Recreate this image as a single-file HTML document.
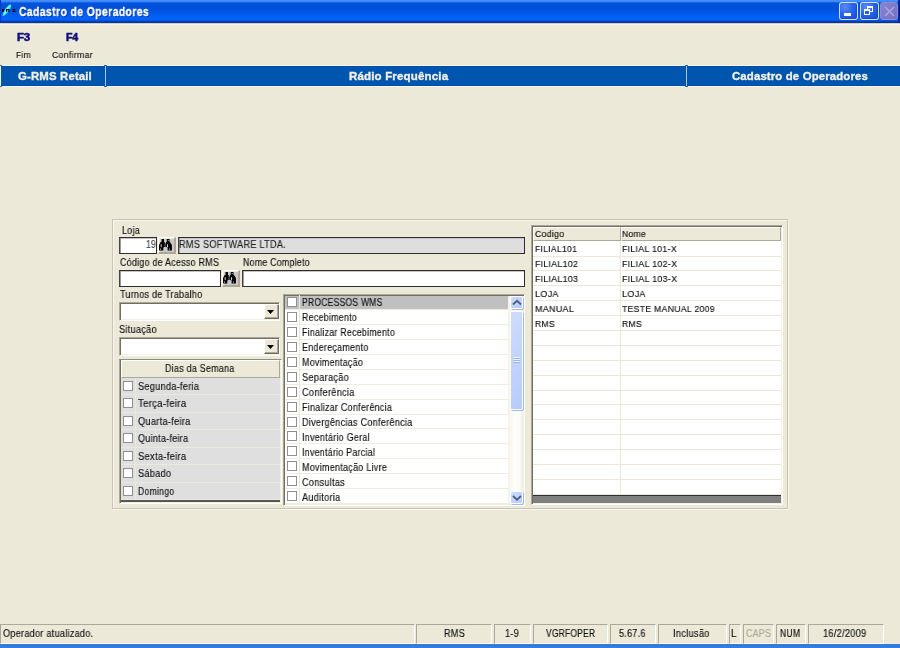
<!DOCTYPE html>
<html><head><meta charset="utf-8"><title>Cadastro de Operadores</title>
<style>
html,body{margin:0;padding:0;width:900px;height:648px;overflow:hidden;background:#ece9d8;font-family:'Liberation Sans', sans-serif;position:relative}
</style></head><body>
<div style="position:absolute;left:0;top:0;width:900px;height:23px;background:linear-gradient(to bottom,#4a95ff 0px,#3a86f8 1.5px,#1566e8 2.5px,#0053da 3.5px,#0050d6 8px,#0054e0 11px,#005cf0 15px,#0064fa 19px,#0062f6 20px,#0048cc 21px,#0a35a0 22px,#0a35a0 23px)"></div>
<div style="position:absolute;left:0px;top:0px;width:1px;height:23px;background:#0038c8"></div>
<div style="position:absolute;left:898px;top:0px;width:2px;height:23px;background:linear-gradient(to right,#0030b0,#001888)"></div>
<div style="position:absolute;left:0px;top:23px;width:900px;height:1px;background:#d5cfb8"></div>
<div style="position:absolute;left:0px;top:24px;width:900px;height:1px;background:#f6f4ec"></div>
<svg style="position:absolute;left:0px;top:2px" width="18" height="17" viewBox="0 0 18 17">
<path d="M2.6 13.2 C3 9.5 5.5 5.5 9 2.9 C10.4 2.1 11.6 2.6 11.2 4.2 C10.4 7.5 7.8 11 4.6 13.6 C3.7 14.3 2.5 14.3 2.6 13.2 Z" fill="#35e6f0"/>
<path d="M4 12.4 C5.5 9.5 7.2 6.5 10 3.6" stroke="#b6fcff" stroke-width="1" fill="none"/>
<g fill="#000"><rect x="2" y="7.2" width="1.7" height="2.6"/><rect x="2" y="7.2" width="2.6" height="1"/>
<rect x="6" y="7.2" width="1.1" height="2.6"/><rect x="8.3" y="7.2" width="1.1" height="2.6"/><rect x="6" y="7.2" width="3.4" height="1"/>
<rect x="12.6" y="7.3" width="2.8" height="1.1"/><rect x="12.6" y="8.9" width="2.8" height="1.1"/></g>
</svg>
<div style="position:absolute;left:839px;top:2px;width:17px;height:16px;border:1px solid rgba(240,246,255,0.85);border-radius:3px;background:radial-gradient(circle at 30% 25%,#5a8cf8 0%,#2a64ea 45%,#1048d8 100%);box-shadow:inset -1px -1px 0 #1a4cc8"><div style="position:absolute;left:4px;top:10px;width:7px;height:3px;background:#fff"></div></div>
<div style="position:absolute;left:860px;top:2px;width:17px;height:16px;border:1px solid rgba(240,246,255,0.85);border-radius:3px;background:radial-gradient(circle at 30% 25%,#5a8cf8 0%,#2a64ea 45%,#1048d8 100%);box-shadow:inset -1px -1px 0 #1a4cc8"><div style="position:absolute;left:6px;top:3px;width:4px;height:3px;border:1px solid #fff;border-top-width:2px"></div><div style="position:absolute;left:3px;top:5.6px;width:4px;height:3px;border:1px solid #fff;border-top-width:2px;background:#2a5fe6"></div></div>
<div style="position:absolute;left:880px;top:2px;width:16px;height:16px;border:1px solid #8e8cd4;border-radius:3px;background:linear-gradient(135deg,#8684d0,#7472c2)"><svg style="position:absolute;left:3px;top:3px" width="11" height="11"><path d="M1 1 L10 10 M10 1 L1 10" stroke="#aaa6e2" stroke-width="1.6"/></svg></div>
<div style="position:absolute;left:0px;top:65px;width:900px;height:1px;background:#f4f6fb"></div>
<div style="position:absolute;left:0px;top:66px;width:900px;height:20px;background:linear-gradient(to bottom,#004aa6 0px,#0055ae 1px,#0055ae 19px,#004aa6 20px)"></div>
<div style="position:absolute;left:0px;top:86px;width:900px;height:1px;background:#f4f6fb"></div>
<div style="position:absolute;left:0px;top:66px;width:1px;height:20px;background:#eef3fa"></div>
<div style="position:absolute;left:-1px;top:65px;width:3px;height:1px;background:#2d6cbc"></div>
<div style="position:absolute;left:-1px;top:86px;width:3px;height:1px;background:#2d6cbc"></div>
<div style="position:absolute;left:105px;top:66px;width:1px;height:20px;background:#a9c3e8"></div>
<div style="position:absolute;left:104px;top:65px;width:3px;height:1px;background:#2d6cbc"></div>
<div style="position:absolute;left:104px;top:86px;width:3px;height:1px;background:#2d6cbc"></div>
<div style="position:absolute;left:686px;top:66px;width:1px;height:20px;background:#a9c3e8"></div>
<div style="position:absolute;left:685px;top:65px;width:3px;height:1px;background:#2d6cbc"></div>
<div style="position:absolute;left:685px;top:86px;width:3px;height:1px;background:#2d6cbc"></div>
<div style="position:absolute;left:113px;top:220px;width:676px;height:290px;border:1px solid #f7f6f0;box-sizing:border-box"></div>
<div style="position:absolute;left:112px;top:219px;width:676px;height:290px;border:1px solid #c9c5b3;box-sizing:border-box"></div>
<div style="position:absolute;left:119px;top:237px;width:38px;height:17px;box-sizing:border-box;border:1px solid #2e2e2e;border-left-color:#444;background:#fff;box-shadow:inset 1px 0 0 #9a9a9a, inset 0 1px 0 #c4c4c4"></div>
<div style="position:absolute;left:158px;top:237px;width:18px;height:17px;box-sizing:border-box;border-top:1px solid #fff;border-left:1px solid #fff;border-right:2px solid #aca899;border-bottom:2px solid #aca899;background:#ece9d8"></div>
<div style="position:absolute;left:159.5px;top:238.5px;width:14.5px;height:13.5px;background:#c9c9c9"></div>
<svg style="position:absolute;left:159.3px;top:239.2px" width="13" height="12" viewBox="0 0 13 12">
<path d="M2.6 0H5V2.8L5.8 3.6V8L4.3 8.5V11.6H0V6L1.5 3.2L2.6 2.8Z M7.7 0H10.5V2.8L11.3 3.4L12.9 6V11.6H8.6V8.5L6.9 8V3.6L7.7 2.8Z" fill="#000"/>
<rect x="5.7" y="4.5" width="1.3" height="3.3" fill="#3a3a3a"/>
<rect x="1.7" y="5.2" width="0.9" height="3" fill="#e6e6e6"/><rect x="8" y="5.2" width="0.9" height="3" fill="#e6e6e6"/>
<rect x="1" y="9.6" width="0.9" height="1" fill="#fff"/><rect x="9.9" y="9.6" width="0.9" height="1" fill="#fff"/>
<rect x="8.8" y="1" width="0.9" height="0.9" fill="#ddd"/>
</svg>
<div style="position:absolute;left:178px;top:237px;width:347px;height:17px;box-sizing:border-box;border:1px solid #2e2e2e;border-left-color:#444;background:#dedede;box-shadow:inset 1px 0 0 #9a9a9a, inset 0 1px 0 #c4c4c4"></div>
<div style="position:absolute;left:119px;top:270px;width:102px;height:17px;box-sizing:border-box;border:1px solid #2e2e2e;border-left-color:#444;background:#fff;box-shadow:inset 1px 0 0 #9a9a9a, inset 0 1px 0 #c4c4c4"></div>
<div style="position:absolute;left:222px;top:270px;width:18px;height:17px;box-sizing:border-box;border-top:1px solid #fff;border-left:1px solid #fff;border-right:2px solid #aca899;border-bottom:2px solid #aca899;background:#ece9d8"></div>
<div style="position:absolute;left:223.5px;top:271.5px;width:14.5px;height:13.5px;background:#c9c9c9"></div>
<svg style="position:absolute;left:223.3px;top:272.2px" width="13" height="12" viewBox="0 0 13 12">
<path d="M2.6 0H5V2.8L5.8 3.6V8L4.3 8.5V11.6H0V6L1.5 3.2L2.6 2.8Z M7.7 0H10.5V2.8L11.3 3.4L12.9 6V11.6H8.6V8.5L6.9 8V3.6L7.7 2.8Z" fill="#000"/>
<rect x="5.7" y="4.5" width="1.3" height="3.3" fill="#3a3a3a"/>
<rect x="1.7" y="5.2" width="0.9" height="3" fill="#e6e6e6"/><rect x="8" y="5.2" width="0.9" height="3" fill="#e6e6e6"/>
<rect x="1" y="9.6" width="0.9" height="1" fill="#fff"/><rect x="9.9" y="9.6" width="0.9" height="1" fill="#fff"/>
<rect x="8.8" y="1" width="0.9" height="0.9" fill="#ddd"/>
</svg>
<div style="position:absolute;left:242px;top:270px;width:283px;height:17px;box-sizing:border-box;border:1px solid #2e2e2e;border-left-color:#444;background:#fff;box-shadow:inset 1px 0 0 #9a9a9a, inset 0 1px 0 #c4c4c4"></div>
<div style="position:absolute;left:119px;top:302px;width:161px;height:19px;box-sizing:border-box;border-top:1px solid #aca899;border-left:1px solid #aca899;border-right:1px solid #fff;border-bottom:1px solid #fff;background:#fff;box-shadow:inset 1px 1px 0 #716f64, inset -1px -1px 0 #f1efe2"></div>
<div style="position:absolute;left:264px;top:304px;width:15px;height:15px;box-sizing:border-box;border-top:1px solid #fff;border-left:1px solid #fff;border-right:1px solid #716f64;border-bottom:1px solid #716f64;background:#ece9d8;box-shadow:inset -1px -1px 0 #aca899"></div>
<svg style="position:absolute;left:267px;top:310px" width="8" height="5"><path d="M0 0h7l-3.5 4z" fill="#000"/></svg>
<div style="position:absolute;left:119px;top:337px;width:161px;height:19px;box-sizing:border-box;border-top:1px solid #aca899;border-left:1px solid #aca899;border-right:1px solid #fff;border-bottom:1px solid #fff;background:#fff;box-shadow:inset 1px 1px 0 #716f64, inset -1px -1px 0 #f1efe2"></div>
<div style="position:absolute;left:264px;top:339px;width:15px;height:15px;box-sizing:border-box;border-top:1px solid #fff;border-left:1px solid #fff;border-right:1px solid #716f64;border-bottom:1px solid #716f64;background:#ece9d8;box-shadow:inset -1px -1px 0 #aca899"></div>
<svg style="position:absolute;left:267px;top:345px" width="8" height="5"><path d="M0 0h7l-3.5 4z" fill="#000"/></svg>
<div style="position:absolute;left:119px;top:359px;width:163px;height:145px;box-sizing:border-box;border-top:1px solid #8f8c7e;border-left:1px solid #aca899;border-right:1px solid #fff;border-bottom:1px solid #fff;background:#5f5f5f;box-shadow:inset 1px 0 0 #716f64, inset -1px -1px 0 #f1efe2"></div>
<div style="position:absolute;left:121px;top:360px;width:159px;height:18px;box-sizing:border-box;background:#ece9d8;border-top:1px solid #fff;border-left:1px solid #fff;border-right:1px solid #aca899;border-bottom:1px solid #aca899"></div>
<div style="position:absolute;left:121px;top:378.0px;width:159px;height:17.46px;background:#dfdfdf;border-bottom:1px solid #ece9d8;box-sizing:border-box"></div>
<div style="position:absolute;left:135px;top:378.0px;width:1px;height:17.46px;background:#ece9d8"></div>
<div style="position:absolute;left:123px;top:381.0px;width:10px;height:10px;box-sizing:border-box;border:1px solid #8f8f8f;background:#fff"></div>
<div style="position:absolute;left:121px;top:395.46px;width:159px;height:17.46px;background:#dfdfdf;border-bottom:1px solid #ece9d8;box-sizing:border-box"></div>
<div style="position:absolute;left:135px;top:395.46px;width:1px;height:17.46px;background:#ece9d8"></div>
<div style="position:absolute;left:123px;top:398.46px;width:10px;height:10px;box-sizing:border-box;border:1px solid #8f8f8f;background:#fff"></div>
<div style="position:absolute;left:121px;top:412.92px;width:159px;height:17.46px;background:#dfdfdf;border-bottom:1px solid #ece9d8;box-sizing:border-box"></div>
<div style="position:absolute;left:135px;top:412.92px;width:1px;height:17.46px;background:#ece9d8"></div>
<div style="position:absolute;left:123px;top:415.92px;width:10px;height:10px;box-sizing:border-box;border:1px solid #8f8f8f;background:#fff"></div>
<div style="position:absolute;left:121px;top:430.38px;width:159px;height:17.46px;background:#dfdfdf;border-bottom:1px solid #ece9d8;box-sizing:border-box"></div>
<div style="position:absolute;left:135px;top:430.38px;width:1px;height:17.46px;background:#ece9d8"></div>
<div style="position:absolute;left:123px;top:433.38px;width:10px;height:10px;box-sizing:border-box;border:1px solid #8f8f8f;background:#fff"></div>
<div style="position:absolute;left:121px;top:447.84px;width:159px;height:17.46px;background:#dfdfdf;border-bottom:1px solid #ece9d8;box-sizing:border-box"></div>
<div style="position:absolute;left:135px;top:447.84px;width:1px;height:17.46px;background:#ece9d8"></div>
<div style="position:absolute;left:123px;top:450.84px;width:10px;height:10px;box-sizing:border-box;border:1px solid #8f8f8f;background:#fff"></div>
<div style="position:absolute;left:121px;top:465.3px;width:159px;height:17.46px;background:#dfdfdf;border-bottom:1px solid #ece9d8;box-sizing:border-box"></div>
<div style="position:absolute;left:135px;top:465.3px;width:1px;height:17.46px;background:#ece9d8"></div>
<div style="position:absolute;left:123px;top:468.3px;width:10px;height:10px;box-sizing:border-box;border:1px solid #8f8f8f;background:#fff"></div>
<div style="position:absolute;left:121px;top:482.76px;width:159px;height:17.46px;background:#dfdfdf;border-bottom:1px solid #ece9d8;box-sizing:border-box"></div>
<div style="position:absolute;left:135px;top:482.76px;width:1px;height:17.46px;background:#ece9d8"></div>
<div style="position:absolute;left:123px;top:485.76px;width:10px;height:10px;box-sizing:border-box;border:1px solid #8f8f8f;background:#fff"></div>
<div style="position:absolute;left:121px;top:500px;width:159px;height:2.4px;background:#575757"></div>
<div style="position:absolute;left:283px;top:294px;width:242px;height:212px;box-sizing:border-box;border-top:1px solid #aca899;border-left:1px solid #aca899;border-right:1px solid #fff;border-bottom:1px solid #fff;background:#fff;box-shadow:inset 1px 1px 0 #716f64, inset -1px -1px 0 #f1efe2"></div>
<div style="position:absolute;left:285px;top:296px;width:223px;height:13px;background:#c0c0c0"></div>
<div style="position:absolute;left:285px;top:308.94px;width:223px;height:1px;background:#efede2"></div>
<div style="position:absolute;left:299px;top:295.0px;width:1px;height:14.94px;background:#ece9d8"></div>
<div style="position:absolute;left:287px;top:297.0px;width:10px;height:10px;box-sizing:border-box;border:1px solid #8f8f8f;background:#fff"></div>
<div style="position:absolute;left:285px;top:323.88px;width:223px;height:1px;background:#efede2"></div>
<div style="position:absolute;left:299px;top:309.94px;width:1px;height:14.94px;background:#ece9d8"></div>
<div style="position:absolute;left:287px;top:311.94px;width:10px;height:10px;box-sizing:border-box;border:1px solid #8f8f8f;background:#fff"></div>
<div style="position:absolute;left:285px;top:338.82px;width:223px;height:1px;background:#efede2"></div>
<div style="position:absolute;left:299px;top:324.88px;width:1px;height:14.94px;background:#ece9d8"></div>
<div style="position:absolute;left:287px;top:326.88px;width:10px;height:10px;box-sizing:border-box;border:1px solid #8f8f8f;background:#fff"></div>
<div style="position:absolute;left:285px;top:353.76px;width:223px;height:1px;background:#efede2"></div>
<div style="position:absolute;left:299px;top:339.82px;width:1px;height:14.94px;background:#ece9d8"></div>
<div style="position:absolute;left:287px;top:341.82px;width:10px;height:10px;box-sizing:border-box;border:1px solid #8f8f8f;background:#fff"></div>
<div style="position:absolute;left:285px;top:368.7px;width:223px;height:1px;background:#efede2"></div>
<div style="position:absolute;left:299px;top:354.76px;width:1px;height:14.94px;background:#ece9d8"></div>
<div style="position:absolute;left:287px;top:356.76px;width:10px;height:10px;box-sizing:border-box;border:1px solid #8f8f8f;background:#fff"></div>
<div style="position:absolute;left:285px;top:383.64px;width:223px;height:1px;background:#efede2"></div>
<div style="position:absolute;left:299px;top:369.7px;width:1px;height:14.94px;background:#ece9d8"></div>
<div style="position:absolute;left:287px;top:371.7px;width:10px;height:10px;box-sizing:border-box;border:1px solid #8f8f8f;background:#fff"></div>
<div style="position:absolute;left:285px;top:398.58px;width:223px;height:1px;background:#efede2"></div>
<div style="position:absolute;left:299px;top:384.64px;width:1px;height:14.94px;background:#ece9d8"></div>
<div style="position:absolute;left:287px;top:386.64px;width:10px;height:10px;box-sizing:border-box;border:1px solid #8f8f8f;background:#fff"></div>
<div style="position:absolute;left:285px;top:413.52px;width:223px;height:1px;background:#efede2"></div>
<div style="position:absolute;left:299px;top:399.58px;width:1px;height:14.94px;background:#ece9d8"></div>
<div style="position:absolute;left:287px;top:401.58px;width:10px;height:10px;box-sizing:border-box;border:1px solid #8f8f8f;background:#fff"></div>
<div style="position:absolute;left:285px;top:428.46px;width:223px;height:1px;background:#efede2"></div>
<div style="position:absolute;left:299px;top:414.52px;width:1px;height:14.94px;background:#ece9d8"></div>
<div style="position:absolute;left:287px;top:416.52px;width:10px;height:10px;box-sizing:border-box;border:1px solid #8f8f8f;background:#fff"></div>
<div style="position:absolute;left:285px;top:443.4px;width:223px;height:1px;background:#efede2"></div>
<div style="position:absolute;left:299px;top:429.46px;width:1px;height:14.94px;background:#ece9d8"></div>
<div style="position:absolute;left:287px;top:431.46px;width:10px;height:10px;box-sizing:border-box;border:1px solid #8f8f8f;background:#fff"></div>
<div style="position:absolute;left:285px;top:458.34px;width:223px;height:1px;background:#efede2"></div>
<div style="position:absolute;left:299px;top:444.4px;width:1px;height:14.94px;background:#ece9d8"></div>
<div style="position:absolute;left:287px;top:446.4px;width:10px;height:10px;box-sizing:border-box;border:1px solid #8f8f8f;background:#fff"></div>
<div style="position:absolute;left:285px;top:473.28px;width:223px;height:1px;background:#efede2"></div>
<div style="position:absolute;left:299px;top:459.34px;width:1px;height:14.94px;background:#ece9d8"></div>
<div style="position:absolute;left:287px;top:461.34px;width:10px;height:10px;box-sizing:border-box;border:1px solid #8f8f8f;background:#fff"></div>
<div style="position:absolute;left:285px;top:488.22px;width:223px;height:1px;background:#efede2"></div>
<div style="position:absolute;left:299px;top:474.28px;width:1px;height:14.94px;background:#ece9d8"></div>
<div style="position:absolute;left:287px;top:476.28px;width:10px;height:10px;box-sizing:border-box;border:1px solid #8f8f8f;background:#fff"></div>
<div style="position:absolute;left:285px;top:503.16px;width:223px;height:1px;background:#efede2"></div>
<div style="position:absolute;left:299px;top:489.22px;width:1px;height:14.94px;background:#ece9d8"></div>
<div style="position:absolute;left:287px;top:491.22px;width:10px;height:10px;box-sizing:border-box;border:1px solid #8f8f8f;background:#fff"></div>
<div style="position:absolute;left:508px;top:296px;width:15px;height:208px;background:linear-gradient(to right,#f3f1e8,#fdfdfa 40%,#fbfbf7 80%,#eeede5)"></div>
<div style="position:absolute;left:510px;top:296px;width:13px;height:13px;box-sizing:border-box;border:1px solid #fff;border-radius:2px;background:linear-gradient(135deg,#cddcfd,#b7cbfa);box-shadow:1px 1px 0 #a3b8e8"><svg style="position:absolute;left:1px;top:2px" width="10" height="8"><path d="M1 5.5 L5 1.8 L9 5.5" stroke="#4d6185" stroke-width="1.8" fill="none"/></svg></div>
<div style="position:absolute;left:510px;top:311px;width:13px;height:99px;box-sizing:border-box;border:1px solid #fff;border-radius:2px;background:linear-gradient(135deg,#cddcfd,#b7cbfa);box-shadow:1px 1px 0 #a3b8e8"><div style="position:absolute;left:2px;top:45px;width:7px;height:6px;background:repeating-linear-gradient(to bottom,#eef3fe 0px,#eef3fe 1px,#9db4e6 1px,#9db4e6 2px)"></div></div>
<div style="position:absolute;left:510px;top:491px;width:13px;height:13px;box-sizing:border-box;border:1px solid #fff;border-radius:2px;background:linear-gradient(135deg,#cddcfd,#b7cbfa);box-shadow:1px 1px 0 #a3b8e8"><svg style="position:absolute;left:1px;top:2px" width="10" height="8"><path d="M1 2 L5 5.7 L9 2" stroke="#4d6185" stroke-width="1.8" fill="none"/></svg></div>
<div style="position:absolute;left:531px;top:225px;width:252px;height:280px;box-sizing:border-box;border-top:1px solid #aca899;border-left:1px solid #aca899;border-right:1px solid #fff;border-bottom:1px solid #fff;background:#808080;box-shadow:inset 1px 1px 0 #716f64, inset -1px -1px 0 #f1efe2"></div>
<div style="position:absolute;left:533px;top:227px;width:88px;height:14px;box-sizing:border-box;background:#ece9d8;border-top:1px solid #fff;border-left:1px solid #fff;border-right:1px solid #aca899;border-bottom:1px solid #aca899"></div>
<div style="position:absolute;left:621px;top:227px;width:160px;height:14px;box-sizing:border-box;background:#ece9d8;border-top:1px solid #fff;border-left:1px solid #fff;border-right:1px solid #aca899;border-bottom:1px solid #aca899"></div>
<div style="position:absolute;left:533px;top:241px;width:248px;height:254px;background:#fff"></div>
<div style="position:absolute;left:533px;top:255.58px;width:248px;height:1px;background:#ebe8da"></div>
<div style="position:absolute;left:533px;top:270.46px;width:248px;height:1px;background:#ebe8da"></div>
<div style="position:absolute;left:533px;top:285.34px;width:248px;height:1px;background:#ebe8da"></div>
<div style="position:absolute;left:533px;top:300.22px;width:248px;height:1px;background:#ebe8da"></div>
<div style="position:absolute;left:533px;top:315.1px;width:248px;height:1px;background:#ebe8da"></div>
<div style="position:absolute;left:533px;top:329.98px;width:248px;height:1px;background:#ebe8da"></div>
<div style="position:absolute;left:533px;top:344.86px;width:248px;height:1px;background:#ebe8da"></div>
<div style="position:absolute;left:533px;top:359.74px;width:248px;height:1px;background:#ebe8da"></div>
<div style="position:absolute;left:533px;top:374.62px;width:248px;height:1px;background:#ebe8da"></div>
<div style="position:absolute;left:533px;top:389.5px;width:248px;height:1px;background:#ebe8da"></div>
<div style="position:absolute;left:533px;top:404.38px;width:248px;height:1px;background:#ebe8da"></div>
<div style="position:absolute;left:533px;top:419.26px;width:248px;height:1px;background:#ebe8da"></div>
<div style="position:absolute;left:533px;top:434.14px;width:248px;height:1px;background:#ebe8da"></div>
<div style="position:absolute;left:533px;top:449.02px;width:248px;height:1px;background:#ebe8da"></div>
<div style="position:absolute;left:533px;top:463.9px;width:248px;height:1px;background:#ebe8da"></div>
<div style="position:absolute;left:533px;top:478.78px;width:248px;height:1px;background:#ebe8da"></div>
<div style="position:absolute;left:533px;top:493.66px;width:248px;height:1px;background:#ebe8da"></div>
<div style="position:absolute;left:620px;top:241px;width:1px;height:254px;background:#ebe8da"></div>
<div style="position:absolute;left:533px;top:495px;width:248px;height:1px;background:#2e2e2e"></div>
<div style="position:absolute;left:0px;top:624px;width:415px;height:20px;box-sizing:border-box;border-top:1px solid #aca899;border-left:1px solid #aca899;border-right:1px solid #fff;border-bottom:1px solid #fff"></div>
<div style="position:absolute;left:416px;top:624px;width:76px;height:20px;box-sizing:border-box;border-top:1px solid #aca899;border-left:1px solid #aca899;border-right:1px solid #fff;border-bottom:1px solid #fff"></div>
<div style="position:absolute;left:494px;top:624px;width:37px;height:20px;box-sizing:border-box;border-top:1px solid #aca899;border-left:1px solid #aca899;border-right:1px solid #fff;border-bottom:1px solid #fff"></div>
<div style="position:absolute;left:533px;top:624px;width:75px;height:20px;box-sizing:border-box;border-top:1px solid #aca899;border-left:1px solid #aca899;border-right:1px solid #fff;border-bottom:1px solid #fff"></div>
<div style="position:absolute;left:610px;top:624px;width:46px;height:20px;box-sizing:border-box;border-top:1px solid #aca899;border-left:1px solid #aca899;border-right:1px solid #fff;border-bottom:1px solid #fff"></div>
<div style="position:absolute;left:658px;top:624px;width:69px;height:20px;box-sizing:border-box;border-top:1px solid #aca899;border-left:1px solid #aca899;border-right:1px solid #fff;border-bottom:1px solid #fff"></div>
<div style="position:absolute;left:729px;top:624px;width:12px;height:20px;box-sizing:border-box;border-top:1px solid #aca899;border-left:1px solid #aca899;border-right:1px solid #fff;border-bottom:1px solid #fff"></div>
<div style="position:absolute;left:743px;top:624px;width:31px;height:20px;box-sizing:border-box;border-top:1px solid #aca899;border-left:1px solid #aca899;border-right:1px solid #fff;border-bottom:1px solid #fff"></div>
<div style="position:absolute;left:776px;top:624px;width:30px;height:20px;box-sizing:border-box;border-top:1px solid #aca899;border-left:1px solid #aca899;border-right:1px solid #fff;border-bottom:1px solid #fff"></div>
<div style="position:absolute;left:808px;top:624px;width:76px;height:20px;box-sizing:border-box;border-top:1px solid #aca899;border-left:1px solid #aca899;border-right:1px solid #fff;border-bottom:1px solid #fff"></div>
<div style="position:absolute;left:0px;top:644px;width:900px;height:4px;background:linear-gradient(to bottom,#5580c0 0px,#2f78df 1px,#3380e6 4px)"></div>
<div style="will-change:transform;position:absolute;left:19.10px;top:5.00px;font-size:12.6px;font-weight:bold;line-height:15.12px;letter-spacing:0.500px;color:#ffffff;white-space:pre;transform:scaleX(0.8236);transform-origin:0 0;-webkit-text-stroke:0.35px #ffffff;text-shadow:1px 1px 0 #0f2e9a">Cadastro de Operadores</div>
<div style="will-change:transform;position:absolute;left:17.40px;top:32.00px;font-size:10px;font-weight:bold;line-height:12.00px;letter-spacing:-0.300px;color:#10107a;white-space:pre;transform:scaleX(1.1432);transform-origin:0 0;-webkit-text-stroke:0.35px #10107a;-webkit-text-stroke:0.5px #10107a;">F3</div>
<div style="will-change:transform;position:absolute;left:66.30px;top:32.00px;font-size:10px;font-weight:bold;line-height:12.00px;letter-spacing:-0.300px;color:#10107a;white-space:pre;transform:scaleX(1.0640);transform-origin:0 0;-webkit-text-stroke:0.35px #10107a;-webkit-text-stroke:0.5px #10107a;">F4</div>
<div style="will-change:transform;position:absolute;left:15.80px;top:49.00px;font-size:9.4px;font-weight:normal;line-height:11.28px;letter-spacing:0.300px;color:#111;white-space:pre;transform:scaleX(0.8998);transform-origin:0 0;-webkit-text-stroke:0.15px #111;">Fim</div>
<div style="will-change:transform;position:absolute;left:51.50px;top:49.00px;font-size:9.4px;font-weight:normal;line-height:11.28px;letter-spacing:0.300px;color:#111;white-space:pre;transform:scaleX(0.9321);transform-origin:0 0;-webkit-text-stroke:0.15px #111;">Confirmar</div>
<div style="will-change:transform;position:absolute;left:17.60px;top:70.00px;font-size:11.2px;font-weight:bold;line-height:13.44px;letter-spacing:0.150px;color:#f2f0e4;white-space:pre;transform:scaleX(1.0176);transform-origin:0 0;-webkit-text-stroke:0.35px #f2f0e4;">G-RMS Retail</div>
<div style="will-change:transform;position:absolute;left:349.00px;top:70.00px;font-size:11.2px;font-weight:bold;line-height:13.44px;letter-spacing:0.150px;color:#f2f0e4;white-space:pre;transform:scaleX(1.0309);transform-origin:0 0;-webkit-text-stroke:0.35px #f2f0e4;">Rádio Frequência</div>
<div style="will-change:transform;position:absolute;left:731.70px;top:70.00px;font-size:11.2px;font-weight:bold;line-height:13.44px;letter-spacing:0.150px;color:#f2f0e4;white-space:pre;transform:scaleX(1.0155);transform-origin:0 0;-webkit-text-stroke:0.35px #f2f0e4;">Cadastro de Operadores</div>
<div style="will-change:transform;position:absolute;left:121.60px;top:225.00px;font-size:10.0px;font-weight:normal;line-height:12.00px;letter-spacing:0.300px;color:#111;white-space:pre;transform:scaleX(0.8987);transform-origin:0 0;-webkit-text-stroke:0.15px #111;">Loja</div>
<div style="will-change:transform;position:absolute;left:145.60px;top:239.00px;font-size:10.0px;font-weight:normal;line-height:12.00px;letter-spacing:0.300px;color:#3a3a3a;white-space:pre;transform:scaleX(0.8578);transform-origin:0 0;-webkit-text-stroke:0.15px #3a3a3a;">19</div>
<div style="will-change:transform;position:absolute;left:178.60px;top:239.00px;font-size:10.0px;font-weight:normal;line-height:12.00px;letter-spacing:0.300px;color:#222;white-space:pre;transform:scaleX(0.9146);transform-origin:0 0;-webkit-text-stroke:0.15px #222;">RMS SOFTWARE LTDA.</div>
<div style="will-change:transform;position:absolute;left:119.70px;top:257.00px;font-size:10.0px;font-weight:normal;line-height:12.00px;letter-spacing:0.300px;color:#111;white-space:pre;transform:scaleX(0.8875);transform-origin:0 0;-webkit-text-stroke:0.15px #111;">Código de Acesso RMS</div>
<div style="will-change:transform;position:absolute;left:242.50px;top:257.00px;font-size:10.0px;font-weight:normal;line-height:12.00px;letter-spacing:0.300px;color:#111;white-space:pre;transform:scaleX(0.8779);transform-origin:0 0;-webkit-text-stroke:0.15px #111;">Nome Completo</div>
<div style="will-change:transform;position:absolute;left:119.60px;top:289.00px;font-size:10.0px;font-weight:normal;line-height:12.00px;letter-spacing:0.300px;color:#111;white-space:pre;transform:scaleX(0.8977);transform-origin:0 0;-webkit-text-stroke:0.15px #111;">Turnos de Trabalho</div>
<div style="will-change:transform;position:absolute;left:119.40px;top:324.00px;font-size:10.0px;font-weight:normal;line-height:12.00px;letter-spacing:0.300px;color:#111;white-space:pre;transform:scaleX(0.9166);transform-origin:0 0;-webkit-text-stroke:0.15px #111;">Situação</div>
<div style="will-change:transform;position:absolute;left:165.40px;top:363.00px;font-size:10.0px;font-weight:normal;line-height:12.00px;letter-spacing:0.300px;color:#111;white-space:pre;transform:scaleX(0.8890);transform-origin:0 0;-webkit-text-stroke:0.15px #111;">Dias da Semana</div>
<div style="will-change:transform;position:absolute;left:138.30px;top:381.00px;font-size:10.0px;font-weight:normal;line-height:12.00px;letter-spacing:0.300px;color:#111;white-space:pre;transform:scaleX(0.9183);transform-origin:0 0;-webkit-text-stroke:0.15px #111;">Segunda-feria</div>
<div style="will-change:transform;position:absolute;left:138.30px;top:398.00px;font-size:10.0px;font-weight:normal;line-height:12.00px;letter-spacing:0.300px;color:#111;white-space:pre;transform:scaleX(0.9572);transform-origin:0 0;-webkit-text-stroke:0.15px #111;">Terça-feira</div>
<div style="will-change:transform;position:absolute;left:138.30px;top:416.00px;font-size:10.0px;font-weight:normal;line-height:12.00px;letter-spacing:0.300px;color:#111;white-space:pre;transform:scaleX(0.9231);transform-origin:0 0;-webkit-text-stroke:0.15px #111;">Quarta-feira</div>
<div style="will-change:transform;position:absolute;left:138.30px;top:433.00px;font-size:10.0px;font-weight:normal;line-height:12.00px;letter-spacing:0.300px;color:#111;white-space:pre;transform:scaleX(0.9001);transform-origin:0 0;-webkit-text-stroke:0.15px #111;">Quinta-feira</div>
<div style="will-change:transform;position:absolute;left:138.30px;top:451.00px;font-size:10.0px;font-weight:normal;line-height:12.00px;letter-spacing:0.300px;color:#111;white-space:pre;transform:scaleX(0.9365);transform-origin:0 0;-webkit-text-stroke:0.15px #111;">Sexta-feira</div>
<div style="will-change:transform;position:absolute;left:138.30px;top:468.00px;font-size:10.0px;font-weight:normal;line-height:12.00px;letter-spacing:0.300px;color:#111;white-space:pre;transform:scaleX(0.9171);transform-origin:0 0;-webkit-text-stroke:0.15px #111;">Sábado</div>
<div style="will-change:transform;position:absolute;left:138.30px;top:486.00px;font-size:10.0px;font-weight:normal;line-height:12.00px;letter-spacing:0.300px;color:#111;white-space:pre;transform:scaleX(0.8630);transform-origin:0 0;-webkit-text-stroke:0.15px #111;">Domingo</div>
<div style="will-change:transform;position:absolute;left:301.60px;top:297.00px;font-size:10.0px;font-weight:normal;line-height:12.00px;letter-spacing:0.300px;color:#111;white-space:pre;transform:scaleX(0.8526);transform-origin:0 0;-webkit-text-stroke:0.15px #111;">PROCESSOS WMS</div>
<div style="will-change:transform;position:absolute;left:301.60px;top:312.00px;font-size:10.0px;font-weight:normal;line-height:12.00px;letter-spacing:0.300px;color:#111;white-space:pre;transform:scaleX(0.8850);transform-origin:0 0;-webkit-text-stroke:0.15px #111;">Recebimento</div>
<div style="will-change:transform;position:absolute;left:301.60px;top:327.00px;font-size:10.0px;font-weight:normal;line-height:12.00px;letter-spacing:0.300px;color:#111;white-space:pre;transform:scaleX(0.8796);transform-origin:0 0;-webkit-text-stroke:0.15px #111;">Finalizar Recebimento</div>
<div style="will-change:transform;position:absolute;left:301.60px;top:342.00px;font-size:10.0px;font-weight:normal;line-height:12.00px;letter-spacing:0.300px;color:#111;white-space:pre;transform:scaleX(0.8934);transform-origin:0 0;-webkit-text-stroke:0.15px #111;">Endereçamento</div>
<div style="will-change:transform;position:absolute;left:301.60px;top:357.00px;font-size:10.0px;font-weight:normal;line-height:12.00px;letter-spacing:0.300px;color:#111;white-space:pre;transform:scaleX(0.8898);transform-origin:0 0;-webkit-text-stroke:0.15px #111;">Movimentação</div>
<div style="will-change:transform;position:absolute;left:301.60px;top:372.00px;font-size:10.0px;font-weight:normal;line-height:12.00px;letter-spacing:0.300px;color:#111;white-space:pre;transform:scaleX(0.9217);transform-origin:0 0;-webkit-text-stroke:0.15px #111;">Separação</div>
<div style="will-change:transform;position:absolute;left:301.60px;top:387.00px;font-size:10.0px;font-weight:normal;line-height:12.00px;letter-spacing:0.300px;color:#111;white-space:pre;transform:scaleX(0.9206);transform-origin:0 0;-webkit-text-stroke:0.15px #111;">Conferência</div>
<div style="will-change:transform;position:absolute;left:301.60px;top:402.00px;font-size:10.0px;font-weight:normal;line-height:12.00px;letter-spacing:0.300px;color:#111;white-space:pre;transform:scaleX(0.8935);transform-origin:0 0;-webkit-text-stroke:0.15px #111;">Finalizar Conferência</div>
<div style="will-change:transform;position:absolute;left:301.60px;top:417.00px;font-size:10.0px;font-weight:normal;line-height:12.00px;letter-spacing:0.300px;color:#111;white-space:pre;transform:scaleX(0.9084);transform-origin:0 0;-webkit-text-stroke:0.15px #111;">Divergências Conferência</div>
<div style="will-change:transform;position:absolute;left:301.60px;top:432.00px;font-size:10.0px;font-weight:normal;line-height:12.00px;letter-spacing:0.300px;color:#111;white-space:pre;transform:scaleX(0.8935);transform-origin:0 0;-webkit-text-stroke:0.15px #111;">Inventário Geral</div>
<div style="will-change:transform;position:absolute;left:301.60px;top:447.00px;font-size:10.0px;font-weight:normal;line-height:12.00px;letter-spacing:0.300px;color:#111;white-space:pre;transform:scaleX(0.8839);transform-origin:0 0;-webkit-text-stroke:0.15px #111;">Inventário Parcial</div>
<div style="will-change:transform;position:absolute;left:301.60px;top:462.00px;font-size:10.0px;font-weight:normal;line-height:12.00px;letter-spacing:0.300px;color:#111;white-space:pre;transform:scaleX(0.8966);transform-origin:0 0;-webkit-text-stroke:0.15px #111;">Movimentação Livre</div>
<div style="will-change:transform;position:absolute;left:301.60px;top:477.00px;font-size:10.0px;font-weight:normal;line-height:12.00px;letter-spacing:0.300px;color:#111;white-space:pre;transform:scaleX(0.9111);transform-origin:0 0;-webkit-text-stroke:0.15px #111;">Consultas</div>
<div style="will-change:transform;position:absolute;left:301.60px;top:492.00px;font-size:10.0px;font-weight:normal;line-height:12.00px;letter-spacing:0.300px;color:#111;white-space:pre;transform:scaleX(0.9124);transform-origin:0 0;-webkit-text-stroke:0.15px #111;">Auditoria</div>
<div style="will-change:transform;position:absolute;left:534.80px;top:228.00px;font-size:9.8px;font-weight:normal;line-height:11.76px;letter-spacing:0.300px;color:#111;white-space:pre;transform:scaleX(0.8972);transform-origin:0 0;-webkit-text-stroke:0.15px #111;">Codigo</div>
<div style="will-change:transform;position:absolute;left:622.40px;top:228.00px;font-size:9.8px;font-weight:normal;line-height:11.76px;letter-spacing:0.300px;color:#111;white-space:pre;transform:scaleX(0.8802);transform-origin:0 0;-webkit-text-stroke:0.15px #111;">Nome</div>
<div style="will-change:transform;position:absolute;left:534.50px;top:243.00px;font-size:9.8px;font-weight:normal;line-height:11.76px;letter-spacing:0.300px;color:#111;white-space:pre;transform:scaleX(0.8778);transform-origin:0 0;-webkit-text-stroke:0.15px #111;">FILIAL101</div>
<div style="will-change:transform;position:absolute;left:622.40px;top:243.00px;font-size:9.8px;font-weight:normal;line-height:11.76px;letter-spacing:0.300px;color:#111;white-space:pre;transform:scaleX(0.9015);transform-origin:0 0;-webkit-text-stroke:0.15px #111;">FILIAL 101-X</div>
<div style="will-change:transform;position:absolute;left:534.50px;top:258.00px;font-size:9.8px;font-weight:normal;line-height:11.76px;letter-spacing:0.300px;color:#111;white-space:pre;transform:scaleX(0.8988);transform-origin:0 0;-webkit-text-stroke:0.15px #111;">FILIAL102</div>
<div style="will-change:transform;position:absolute;left:622.40px;top:258.00px;font-size:9.8px;font-weight:normal;line-height:11.76px;letter-spacing:0.300px;color:#111;white-space:pre;transform:scaleX(0.9065);transform-origin:0 0;-webkit-text-stroke:0.15px #111;">FILIAL 102-X</div>
<div style="will-change:transform;position:absolute;left:534.50px;top:273.00px;font-size:9.8px;font-weight:normal;line-height:11.76px;letter-spacing:0.300px;color:#111;white-space:pre;transform:scaleX(0.8988);transform-origin:0 0;-webkit-text-stroke:0.15px #111;">FILIAL103</div>
<div style="will-change:transform;position:absolute;left:622.40px;top:273.00px;font-size:9.8px;font-weight:normal;line-height:11.76px;letter-spacing:0.300px;color:#111;white-space:pre;transform:scaleX(0.9065);transform-origin:0 0;-webkit-text-stroke:0.15px #111;">FILIAL 103-X</div>
<div style="will-change:transform;position:absolute;left:534.50px;top:288.00px;font-size:9.8px;font-weight:normal;line-height:11.76px;letter-spacing:0.300px;color:#111;white-space:pre;transform:scaleX(0.9246);transform-origin:0 0;-webkit-text-stroke:0.15px #111;">LOJA</div>
<div style="will-change:transform;position:absolute;left:622.40px;top:288.00px;font-size:9.8px;font-weight:normal;line-height:11.76px;letter-spacing:0.300px;color:#111;white-space:pre;transform:scaleX(0.9246);transform-origin:0 0;-webkit-text-stroke:0.15px #111;">LOJA</div>
<div style="will-change:transform;position:absolute;left:534.50px;top:303.00px;font-size:9.8px;font-weight:normal;line-height:11.76px;letter-spacing:0.300px;color:#111;white-space:pre;transform:scaleX(0.9163);transform-origin:0 0;-webkit-text-stroke:0.15px #111;">MANUAL</div>
<div style="will-change:transform;position:absolute;left:622.40px;top:303.00px;font-size:9.8px;font-weight:normal;line-height:11.76px;letter-spacing:0.300px;color:#111;white-space:pre;transform:scaleX(0.8887);transform-origin:0 0;-webkit-text-stroke:0.15px #111;">TESTE MANUAL 2009</div>
<div style="will-change:transform;position:absolute;left:534.50px;top:318.00px;font-size:9.8px;font-weight:normal;line-height:11.76px;letter-spacing:0.300px;color:#111;white-space:pre;transform:scaleX(0.8847);transform-origin:0 0;-webkit-text-stroke:0.15px #111;">RMS</div>
<div style="will-change:transform;position:absolute;left:622.40px;top:318.00px;font-size:9.8px;font-weight:normal;line-height:11.76px;letter-spacing:0.300px;color:#111;white-space:pre;transform:scaleX(0.8847);transform-origin:0 0;-webkit-text-stroke:0.15px #111;">RMS</div>
<div style="will-change:transform;position:absolute;left:2.50px;top:628.00px;font-size:10.0px;font-weight:normal;line-height:12.00px;letter-spacing:0.300px;color:#111;white-space:pre;transform:scaleX(0.9091);transform-origin:0 0;-webkit-text-stroke:0.15px #111;">Operador atualizado.</div>
<div style="will-change:transform;position:absolute;left:443.56px;top:628.00px;font-size:10.0px;font-weight:normal;line-height:12.00px;letter-spacing:0.300px;color:#111;white-space:pre;transform:scaleX(0.9056);transform-origin:0 0;-webkit-text-stroke:0.15px #111;">RMS</div>
<div style="will-change:transform;position:absolute;left:505.03px;top:628.00px;font-size:10.0px;font-weight:normal;line-height:12.00px;letter-spacing:0.300px;color:#111;white-space:pre;transform:scaleX(0.9121);transform-origin:0 0;-webkit-text-stroke:0.15px #111;">1-9</div>
<div style="will-change:transform;position:absolute;left:545.60px;top:628.00px;font-size:10.0px;font-weight:normal;line-height:12.00px;letter-spacing:0.300px;color:#111;white-space:pre;transform:scaleX(0.8433);transform-origin:0 0;-webkit-text-stroke:0.15px #111;">VGRFOPER</div>
<div style="will-change:transform;position:absolute;left:619.00px;top:628.00px;font-size:10.0px;font-weight:normal;line-height:12.00px;letter-spacing:0.300px;color:#111;white-space:pre;transform:scaleX(0.9006);transform-origin:0 0;-webkit-text-stroke:0.15px #111;">5.67.6</div>
<div style="will-change:transform;position:absolute;left:673.00px;top:628.00px;font-size:10.0px;font-weight:normal;line-height:12.00px;letter-spacing:0.300px;color:#111;white-space:pre;transform:scaleX(0.9250);transform-origin:0 0;-webkit-text-stroke:0.15px #111;">Inclusão</div>
<div style="will-change:transform;position:absolute;left:731.40px;top:628.00px;font-size:10.0px;font-weight:normal;line-height:12.00px;letter-spacing:0.000px;color:#111;white-space:pre;-webkit-text-stroke:0.15px #111;">L</div>
<div style="will-change:transform;position:absolute;left:745.60px;top:628.00px;font-size:10.0px;font-weight:normal;line-height:12.00px;letter-spacing:0.300px;color:#aca899;white-space:pre;transform:scaleX(0.8815);transform-origin:0 0;-webkit-text-stroke:0.15px #aca899;">CAPS</div>
<div style="will-change:transform;position:absolute;left:780.30px;top:628.00px;font-size:10.0px;font-weight:normal;line-height:12.00px;letter-spacing:0.300px;color:#111;white-space:pre;transform:scaleX(0.8597);transform-origin:0 0;-webkit-text-stroke:0.15px #111;">NUM</div>
<div style="will-change:transform;position:absolute;left:823.40px;top:628.00px;font-size:10.0px;font-weight:normal;line-height:12.00px;letter-spacing:0.300px;color:#111;white-space:pre;transform:scaleX(0.9211);transform-origin:0 0;-webkit-text-stroke:0.15px #111;">16/2/2009</div>
</body></html>
